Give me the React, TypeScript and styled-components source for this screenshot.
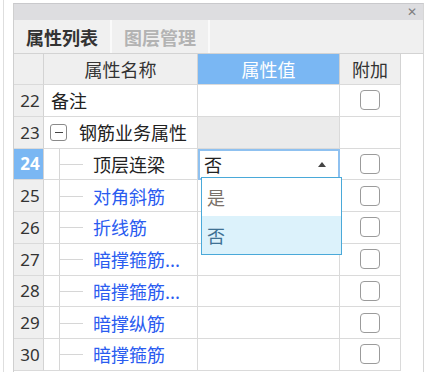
import React from "react";
import styled, { createGlobalStyle } from "styled-components";

const Global = createGlobalStyle`
  html, body { margin: 0; padding: 0; background: #ffffff; }
  body { font-family: "Noto Sans CJK SC", "Noto Sans", sans-serif; overflow: hidden; }
`;

const Page = styled.div`
  display: flex;
  width: 425px;
  height: 372px;
  overflow: hidden;
  background: #fff;
`;

const LeftRule = styled.div`
  flex-shrink: 0;
  width: 1px;
  margin-left: 3px;
  margin-right: 9px;
  background: #dedede;
`;

const Panel = styled.div`
  display: flex;
  flex-direction: column;
  width: 409px;
  margin-top: 3px;
  border-left: 1px solid #cfcfcf;
  border-right: 1px solid #d6d6d6;
  border-top: 1px solid #c9c9cc;
`;

const TitleBar = styled.div`
  flex-shrink: 0;
  height: 16px;
  background: #dddde0;
  display: flex;
  justify-content: flex-end;
  align-items: center;
  padding-right: 6px;
`;

const Close = styled.span`
  font-family: "DejaVu Sans", sans-serif;
  font-size: 12px;
  font-weight: bold;
  color: #7f7f7f;
  line-height: 1;
`;

const TabStrip = styled.div`
  flex-shrink: 0;
  height: 33px;
  display: flex;
  background: #f0f0f0;
  border-bottom: 1px solid #d3d3d3;
`;

const Tab = styled.div<{ $active?: boolean }>`
  width: 96px;
  display: flex;
  align-items: center;
  justify-content: center;
  font-size: 18px;
  font-weight: bold;
  color: ${(p) => (p.$active ? "#333" : "#b3b3b3")};
  border-right: 2px solid #fafafa;
`;

const Body = styled.div`
  display: flex;
  flex-shrink: 0;
`;

const Table = styled.div`
  position: relative;
  display: grid;
  grid-template-columns: 30px 154px 142px 61px;
  grid-auto-rows: 31.75px;
  grid-template-rows: 31px;
  align-content: start;
  width: 387px;
`;

const Cell = styled.div<{ $bg?: string }>`
  position: relative;
  display: flex;
  align-items: center;
  border-right: 1px solid #dadada;
  border-bottom: 1px solid #dadada;
  background: ${(p) => p.$bg || "#fff"};
  font-size: 18px;
  line-height: 1;
  color: #222;
  overflow: hidden;
  white-space: nowrap;
`;

const HeadCell = styled(Cell)<{ $hl?: boolean }>`
  justify-content: center;
  background: ${(p) => (p.$hl ? "#7ab7f3" : "#efefef")};
  color: ${(p) => (p.$hl ? "#ffffff" : "#333")};
  border-right-color: ${(p) => (p.$hl ? "#d0d0d0" : "#d3d3d3")};
`;

const NumCell = styled(Cell)<{ $sel?: boolean }>`
  justify-content: center;
  padding-left: 3px;
  box-sizing: border-box;
  font-family: "Noto Sans", sans-serif;
  font-size: 17px;
  background: ${(p) => (p.$sel ? "#7ab7f3" : "#efefef")};
  color: ${(p) => (p.$sel ? "#fff" : "#333")};
  font-weight: ${(p) => (p.$sel ? "bold" : "normal")};
  border-right-color: #d3d3d3;
`;

const NameText = styled.span<{ $indent: number; $blue?: boolean }>`
  padding-left: ${(p) => p.$indent}px;
  color: ${(p) => (p.$blue ? "#2a5cf0" : "#222")};
`;

const Toggle = styled.span`
  position: absolute;
  left: 6px;
  top: 7px;
  width: 17px;
  height: 17px;
  border: 1px solid #8a8a8a;
  border-radius: 3px;
  box-sizing: border-box;
  display: flex;
  align-items: center;
  justify-content: center;
  &::after {
    content: "";
    width: 8px;
    height: 1.5px;
    background: #444;
  }
`;

const TreeV = styled.span`
  position: absolute;
  left: 15px;
  top: 0;
  bottom: 0;
  width: 1px;
  background: #d6d6d6;
`;

const TreeH = styled.span`
  position: absolute;
  left: 15px;
  top: 50%;
  width: 24px;
  height: 1px;
  background: #d6d6d6;
`;

const CheckCell = styled(Cell)`
  justify-content: center;
`;

const Box = styled.span`
  width: 20px;
  height: 20px;
  box-sizing: border-box;
  border: 1.5px solid #9b9b9b;
  border-radius: 4px;
  background: #fff;
`;

const EditCell = styled(Cell)`
  border: 2px solid #8fc1f0;
  box-sizing: border-box;
  padding-left: 4px;
  justify-content: space-between;
  padding-right: 12px;
`;

const Caret = styled.span`
  width: 0;
  height: 0;
  border-left: 4px solid transparent;
  border-right: 4px solid transparent;
  border-bottom: 5px solid #444;
`;

const Dropdown = styled.div`
  position: absolute;
  left: 187px;
  top: 123px;
  width: 141px;
  height: 78px;
  box-sizing: border-box;
  border: 1px solid #4aa9d9;
  background: #fff;
  display: flex;
  flex-direction: column;
`;

const Option = styled.div<{ $sel?: boolean }>`
  height: 38px;
  display: flex;
  align-items: center;
  padding-left: 5px;
  font-size: 18px;
  background: ${(p) => (p.$sel ? "#dcf2fb" : "#fff")};
  color: ${(p) => (p.$sel ? "#3f7193" : "#7a7068")};
`;

const Filler = styled.div`
  flex: 1;
  background: #fff;
`;

type Row = { n: number; name: string; kind: "plain" | "group" | "child"; blue?: boolean; check: boolean };

const rows: Row[] = [
  { n: 22, name: "备注", kind: "plain", check: true },
  { n: 23, name: "钢筋业务属性", kind: "group", check: false },
  { n: 24, name: "顶层连梁", kind: "child", check: true },
  { n: 25, name: "对角斜筋", kind: "child", blue: true, check: true },
  { n: 26, name: "折线筋", kind: "child", blue: true, check: true },
  { n: 27, name: "暗撑箍筋...", kind: "child", blue: true, check: true },
  { n: 28, name: "暗撑箍筋...", kind: "child", blue: true, check: true },
  { n: 29, name: "暗撑纵筋", kind: "child", blue: true, check: true },
  { n: 30, name: "暗撑箍筋", kind: "child", blue: true, check: true },
];

export default function App() {
  return (
    <>
      <Global />
      <Page>
        <LeftRule />
        <Panel>
          <TitleBar>
            <Close>✕</Close>
          </TitleBar>
          <TabStrip>
            <Tab $active>属性列表</Tab>
            <Tab>图层管理</Tab>
          </TabStrip>
          <Body>
            <Table>
              <HeadCell />
              <HeadCell>属性名称</HeadCell>
              <HeadCell $hl>属性值</HeadCell>
              <HeadCell>附加</HeadCell>
              {rows.map((r) => (
                <React.Fragment key={r.n}>
                  <NumCell $sel={r.n === 24}>{r.n}</NumCell>
                  <Cell>
                    {r.kind === "group" && <Toggle />}
                    {r.kind === "child" && (
                      <>
                        <TreeV />
                        <TreeH />
                      </>
                    )}
                    <NameText
                      $indent={r.kind === "plain" ? 7 : r.kind === "group" ? 35 : 49}
                      $blue={r.blue}
                    >
                      {r.name}
                    </NameText>
                  </Cell>
                  {r.n === 24 ? (
                    <EditCell>
                      <span>否</span>
                      <Caret />
                    </EditCell>
                  ) : (
                    <Cell $bg={r.kind === "group" ? "#ebebeb" : "#fff"} />
                  )}
                  <CheckCell>{r.check && <Box />}</CheckCell>
                </React.Fragment>
              ))}
              <Dropdown>
                <Option>是</Option>
                <Option $sel>否</Option>
              </Dropdown>
            </Table>
            <Filler />
          </Body>
        </Panel>
      </Page>
    </>
  );
}
